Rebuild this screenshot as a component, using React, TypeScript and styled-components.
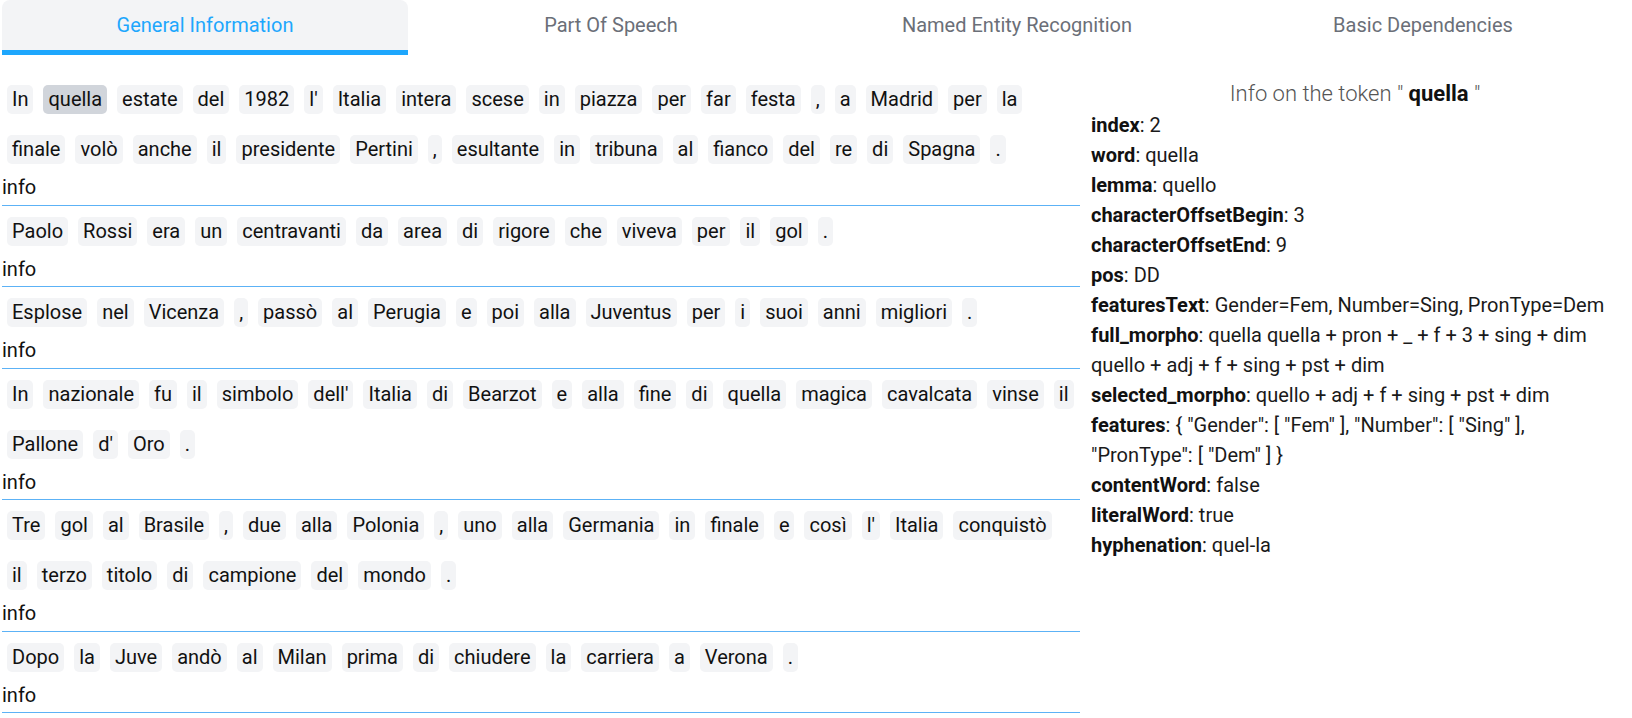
import React, { useState, FC } from 'react';
import styled, { createGlobalStyle } from 'styled-components';

const GlobalStyle = createGlobalStyle`
  html, body {
    margin: 0;
    padding: 0;
    background: #fff;
    font-family: Roboto, "Liberation Sans", Arial, sans-serif;
    color: #111;
  }
`;

const TABS = ['General Information', 'Part Of Speech', 'Named Entity Recognition', 'Basic Dependencies'];

// each sentence is split in the rows it wraps to
const SENTENCES: string[][][] = [
  [
    ['In', 'quella', 'estate', 'del', '1982', "l'", 'Italia', 'intera', 'scese', 'in', 'piazza', 'per', 'far', 'festa', ',', 'a', 'Madrid', 'per', 'la'],
    ['finale', 'volò', 'anche', 'il', 'presidente', 'Pertini', ',', 'esultante', 'in', 'tribuna', 'al', 'fianco', 'del', 're', 'di', 'Spagna', '.'],
  ],
  [
    ['Paolo', 'Rossi', 'era', 'un', 'centravanti', 'da', 'area', 'di', 'rigore', 'che', 'viveva', 'per', 'il', 'gol', '.'],
  ],
  [
    ['Esplose', 'nel', 'Vicenza', ',', 'passò', 'al', 'Perugia', 'e', 'poi', 'alla', 'Juventus', 'per', 'i', 'suoi', 'anni', 'migliori', '.'],
  ],
  [
    ['In', 'nazionale', 'fu', 'il', 'simbolo', "dell'", 'Italia', 'di', 'Bearzot', 'e', 'alla', 'fine', 'di', 'quella', 'magica', 'cavalcata', 'vinse', 'il'],
    ['Pallone', "d'", 'Oro', '.'],
  ],
  [
    ['Tre', 'gol', 'al', 'Brasile', ',', 'due', 'alla', 'Polonia', ',', 'uno', 'alla', 'Germania', 'in', 'finale', 'e', 'così', "l'", 'Italia', 'conquistò'],
    ['il', 'terzo', 'titolo', 'di', 'campione', 'del', 'mondo', '.'],
  ],
  [
    ['Dopo', 'la', 'Juve', 'andò', 'al', 'Milan', 'prima', 'di', 'chiudere', 'la', 'carriera', 'a', 'Verona', '.'],
  ],
];

const TOKEN_INFO: { key: string; lines: string[] }[] = [
  { key: 'index', lines: ['2'] },
  { key: 'word', lines: ['quella'] },
  { key: 'lemma', lines: ['quello'] },
  { key: 'characterOffsetBegin', lines: ['3'] },
  { key: 'characterOffsetEnd', lines: ['9'] },
  { key: 'pos', lines: ['DD'] },
  { key: 'featuresText', lines: ['Gender=Fem, Number=Sing, PronType=Dem'] },
  { key: 'full_morpho', lines: ['quella quella + pron + _ + f + 3 + sing + dim', 'quello + adj + f + sing + pst + dim'] },
  { key: 'selected_morpho', lines: ['quello + adj + f + sing + pst + dim'] },
  { key: 'features', lines: ['{ "Gender": [ "Fem" ], "Number": [ "Sing" ],', '"PronType": [ "Dem" ] }'] },
  { key: 'contentWord', lines: ['false'] },
  { key: 'literalWord', lines: ['true'] },
  { key: 'hyphenation', lines: ['quel-la'] },
];

const Page = styled.div`
  padding: 0 2px;
`;

const TabBar = styled.div`
  display: grid;
  grid-template-columns: repeat(4, 406px);
`;

const Tab = styled.div<{ $active?: boolean }>`
  height: 50px;
  display: flex;
  align-items: center;
  justify-content: center;
  font-size: 20px;
  cursor: pointer;
  color: ${(p) => (p.$active ? '#1ea7fd' : '#6b6f78')};
  background: ${(p) => (p.$active ? '#f3f4f6' : 'transparent')};
  border-radius: 8px 8px 0 0;
  border-bottom: 5px solid ${(p) => (p.$active ? '#1ea7fd' : 'transparent')};
`;

const Panel = styled.div`
  display: grid;
  grid-template-columns: 1078px 1fr;
  padding-top: 19px;
`;

const SentenceList = styled.div`
  display: flex;
  flex-direction: column;
`;

const SentenceBlock = styled.div`
  padding: 11px 0 4.7px;
  border-bottom: 1px solid #5cb2f6;
`;

const TokenRows = styled.div`
  display: flex;
  flex-direction: column;
  gap: 20.6px;
  padding-left: 5px;
  margin-bottom: 12px;
`;

const TokenRow = styled.div`
  display: flex;
  gap: 10px;
  white-space: nowrap;
`;

const Token = styled.span<{ $selected?: boolean }>`
  padding: 3px 5px;
  font-size: 20px;
  line-height: 23.4px;
  border-radius: 5px;
  cursor: pointer;
  color: #111;
  background: ${(p) => (p.$selected ? '#d1d5db' : '#f3f4f6')};
`;

const InfoLabel = styled.div`
  font-size: 20px;
  line-height: 23.4px;
  color: #111;
`;

const InfoPanel = styled.div`
  padding-top: 2.5px;
`;

const InfoTitle = styled.div`
  text-align: center;
  font-size: 22px;
  font-weight: 300;
  line-height: 33px;
  color: #555;

  strong {
    font-weight: 700;
    color: #111;
  }
`;

const PropList = styled.div`
  padding-left: 11px;
  font-size: 20px;
  line-height: 30px;
  color: #1a1a1a;
`;

const PropKey = styled.span`
  font-weight: 700;
  color: #111;
`;

const App: FC = () => {
  const [activeTab, setActiveTab] = useState(0);
  const [selected, setSelected] = useState({ s: 0, r: 0, t: 1 });

  return (
    <Page>
      <GlobalStyle />
      <TabBar>
        {TABS.map((label, i) => (
          <Tab key={label} $active={i === activeTab} onClick={() => setActiveTab(i)}>
            {label}
          </Tab>
        ))}
      </TabBar>
      <Panel>
        <SentenceList>
          {SENTENCES.map((rows, s) => (
            <SentenceBlock key={s}>
              <TokenRows>
                {rows.map((row, r) => (
                  <TokenRow key={r}>
                    {row.map((tok, t) => (
                      <Token
                        key={t}
                        $selected={selected.s === s && selected.r === r && selected.t === t}
                        onClick={() => setSelected({ s, r, t })}
                      >
                        {tok}
                      </Token>
                    ))}
                  </TokenRow>
                ))}
              </TokenRows>
              <InfoLabel>info</InfoLabel>
            </SentenceBlock>
          ))}
        </SentenceList>
        <InfoPanel>
          <InfoTitle>
            Info on the token &quot; <strong>quella</strong> &quot;
          </InfoTitle>
          <PropList>
            {TOKEN_INFO.map(({ key, lines }) => (
              <div key={key}>
                <PropKey>{key}</PropKey>: {lines[0]}
                {lines.slice(1).map((l) => (
                  <div key={l}>{l}</div>
                ))}
              </div>
            ))}
          </PropList>
        </InfoPanel>
      </Panel>
    </Page>
  );
};

export default App;
